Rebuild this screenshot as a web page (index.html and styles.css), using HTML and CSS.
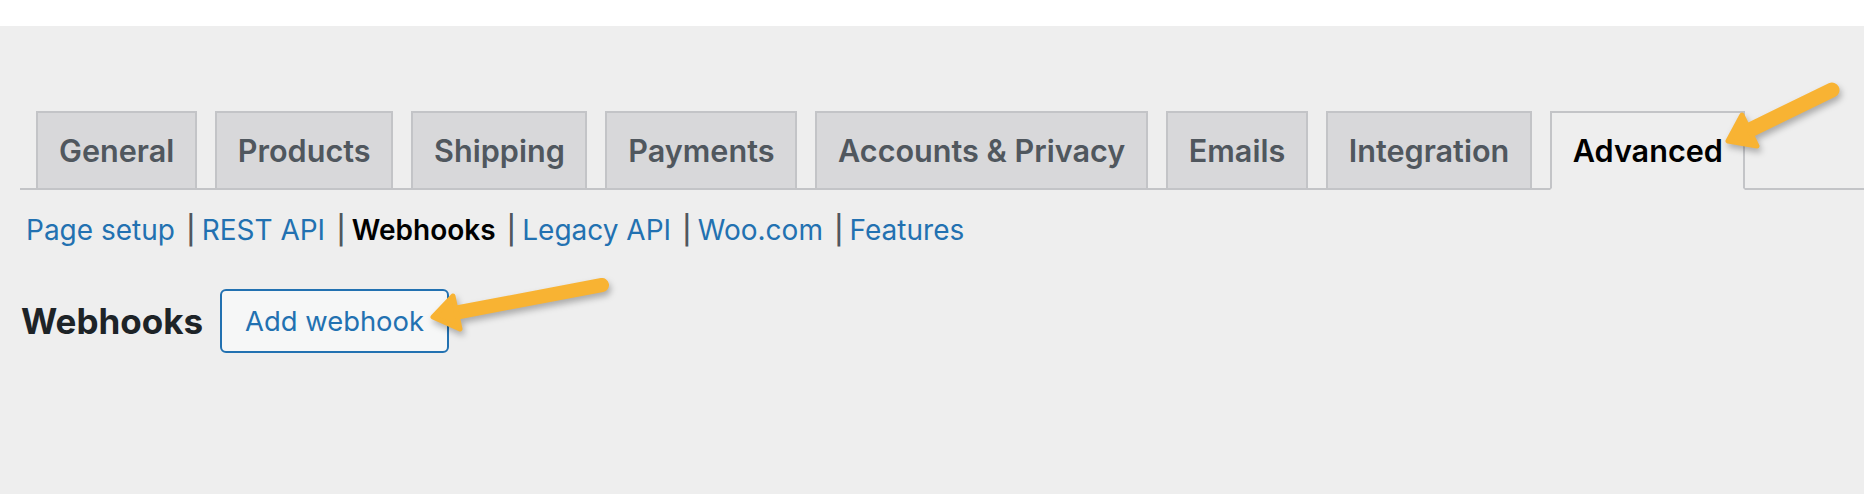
FILE: index.html
```html
<!DOCTYPE html>
<html lang="en">
<head>
<meta charset="utf-8">
<title>WooCommerce Settings - Advanced - Webhooks</title>
<link rel="stylesheet" href="styles.css">
</head>
<body>
<div class="topbar"></div>
<main class="wrap">
  <nav class="nav-tabs">
    <a class="nav-tab">General</a>
    <a class="nav-tab">Products</a>
    <a class="nav-tab">Shipping</a>
    <a class="nav-tab">Payments</a>
    <a class="nav-tab">Accounts &amp; Privacy</a>
    <a class="nav-tab">Emails</a>
    <a class="nav-tab">Integration</a>
    <a class="nav-tab nav-tab-active">Advanced</a>
  </nav>
  <ul class="subsubsub">
    <li><a class="sub-link">Page setup</a><span class="sep">|</span></li>
    <li><a class="sub-link">REST API</a><span class="sep">|</span></li>
    <li><a class="sub-link current">Webhooks</a><span class="sep">|</span></li>
    <li><a class="sub-link">Legacy API</a><span class="sep">|</span></li>
    <li><a class="sub-link">Woo.com</a><span class="sep">|</span></li>
    <li><a class="sub-link">Features</a></li>
  </ul>
  <div class="heading-row">
    <h2 class="page-title">Webhooks</h2>
    <a class="button">Add webhook</a>
  </div>
</main>
<svg class="arrows" width="1864" height="494" viewBox="0 0 1864 494" aria-hidden="true">
  <g class="arrow">
    <line x1="1832" y1="90" x2="1750" y2="130" stroke-width="15" stroke-linecap="round"/>
    <polygon points="1728,141 1757,146 1742,115" stroke-width="5" stroke-linejoin="round"/>
  </g>
  <g class="arrow">
    <line x1="602" y1="285" x2="457" y2="312.5" stroke-width="14" stroke-linecap="round"/>
    <polygon points="433,317 460,329 453,296" stroke-width="5" stroke-linejoin="round"/>
  </g>
</svg>
</body>
</html>
```

FILE: styles.css
```css
html, body {
  margin: 0;
  padding: 0;
}
body {
  background: #eeeeee;
  font-family: Inter, "Noto Sans", "Liberation Sans", sans-serif;
  width: 1864px;
  height: 494px;
  overflow: hidden;
  position: relative;
}
.topbar {
  height: 26px;
  background: #ffffff;
}
.wrap {
  padding: 85px 0 0 20px;
}
.nav-tabs {
  display: flex;
  gap: 18px;
  padding-left: 16px;
  border-bottom: 2px solid #c3c4c7;
  height: 77px;
}
.nav-tab {
  box-sizing: border-box;
  height: 77px;
  display: flex;
  align-items: center;
  padding: 0 20.5px 0 21px;
  border: 2px solid #c3c4c7;
  border-bottom: none;
  background: #d8d8da;
  color: #50575e;
  font-size: 30.6px;
  font-weight: 600;
  white-space: nowrap;
}
.nav-tab-active {
  background: #eeeeee;
  color: #000000;
  border-bottom: 2px solid #eeeeee;
  height: 79px;
}
.subsubsub {
  list-style: none;
  margin: 0;
  padding: 23px 0 0 6px;
  display: flex;
  font-size: 28px;
  line-height: 34px;
}
.subsubsub li {
  display: flex;
  align-items: center;
}
.sub-link {
  color: #2271b1;
}
.sub-link.current {
  color: #000000;
  font-weight: 600;
}
.sep {
  color: #50575e;
  margin: 0 6px 0 11px;
  font-weight: 500;
}
.heading-row {
  display: flex;
  align-items: center;
  gap: 17px;
  padding-top: 42px;
}
.page-title {
  margin: 0;
  font-size: 35px;
  font-weight: 700;
  color: #1d2327;
  padding-left: 1px;
}
.button {
  box-sizing: border-box;
  height: 64px;
  display: flex;
  align-items: center;
  padding: 0 23px;
  border: 2px solid #2271b1;
  border-radius: 6px;
  background: #f6f7f7;
  color: #2271b1;
  font-size: 27.4px;
}
.arrows {
  position: absolute;
  left: 0;
  top: 0;
  pointer-events: none;
}
.arrow {
  stroke: #f8b333;
  fill: #f8b333;
  filter: drop-shadow(2px 4px 3px rgba(0, 0, 0, 0.28));
}
```
